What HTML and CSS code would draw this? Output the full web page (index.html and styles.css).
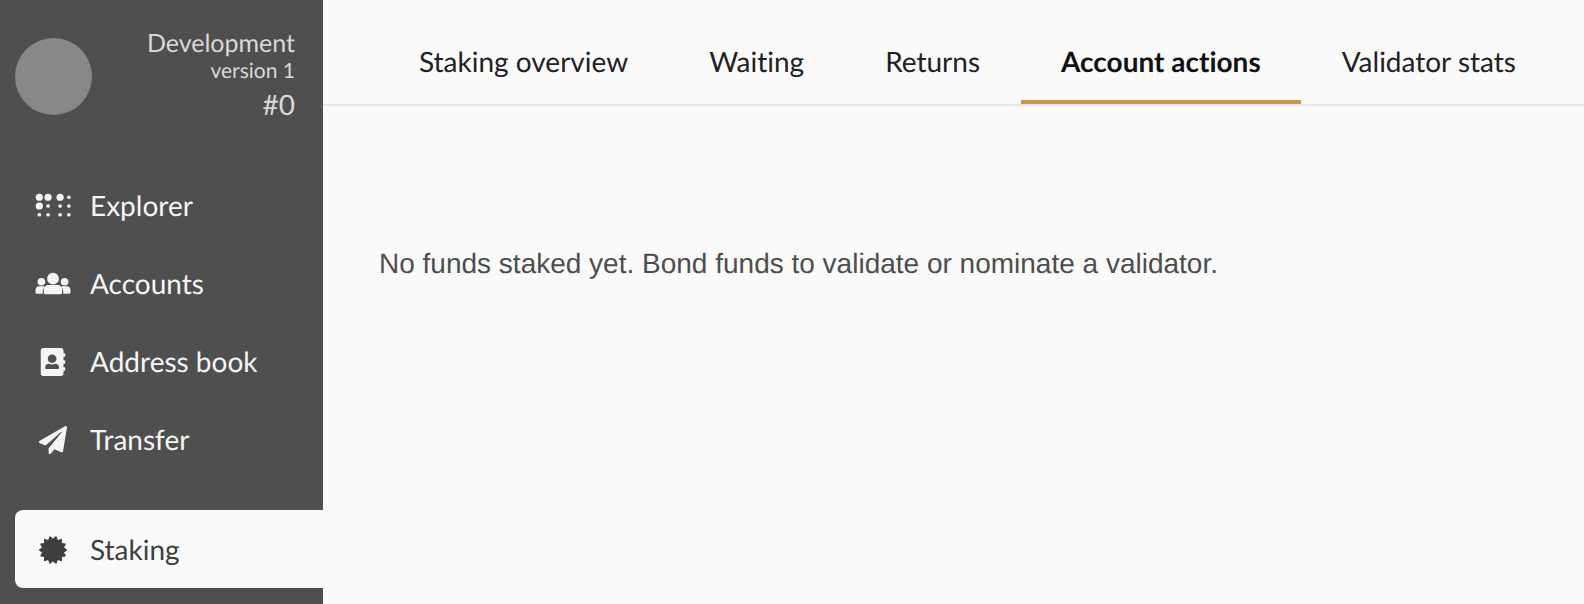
FILE: index.html
```html
<!DOCTYPE html>
<html lang="en">
<head>
<meta charset="utf-8">
<title>Staking</title>
<link rel="stylesheet" href="styles.css">
</head>
<body>
<div class="app">
  <aside class="sidebar">
    <header class="chain">
      <span class="chain-logo"></span>
      <div class="chain-info">
        <div class="chain-name">Development</div>
        <div class="chain-version">version 1</div>
        <div class="chain-block">#0</div>
      </div>
    </header>
    <nav class="menu">
      <a class="menu-item" href="#explorer">
        <svg class="icon" viewBox="0 0 640 512" aria-hidden="true"><circle cx="70" cy="96" r="66"/><circle cx="230" cy="96" r="66"/><circle cx="450" cy="96" r="66"/><circle cx="70" cy="256" r="66"/><circle cx="610" cy="96" r="34"/><circle cx="230" cy="256" r="34"/><circle cx="450" cy="256" r="34"/><circle cx="610" cy="256" r="34"/><circle cx="70" cy="416" r="34"/><circle cx="230" cy="416" r="34"/><circle cx="450" cy="416" r="34"/><circle cx="610" cy="416" r="34"/></svg>
        Explorer
      </a>
      <a class="menu-item" href="#accounts">
        <svg class="icon" viewBox="0 0 640 512" aria-hidden="true"><circle cx="320" cy="158" r="108"/><circle cx="108" cy="214" r="70"/><circle cx="532" cy="214" r="70"/><path d="M240 272h160c50 0 88 38 88 90v50c0 18-12 30-30 30H182c-18 0-30-12-30-30v-50c0-52 38-90 88-90zM68 296h74c12 0 22 4 30 10-28 28-40 60-40 96v32H28c-16 0-28-12-28-28v-42c0-38 30-68 68-68zM498 296h74c38 0 68 30 68 68v42c0 16-12 28-28 28H508v-32c0-36-12-68-40-96 8-6 18-10 30-10z"/></svg>
        Accounts
      </a>
      <a class="menu-item" href="#addresses">
        <svg class="icon" viewBox="0 0 448 512" aria-hidden="true"><path fill-rule="evenodd" d="M436 160c6.600 0 12-5.400 12-12v-40c0-6.600-5.400-12-12-12h-20V48c0-26.500-21.500-48-48-48H48C21.500 0 0 21.500 0 48v416c0 26.500 21.500 48 48 48h320c26.500 0 48-21.500 48-48v-48h20c6.600 0 12-5.400 12-12v-40c0-6.600-5.400-12-12-12h-20v-64h20c6.600 0 12-5.400 12-12v-40c0-6.600-5.400-12-12-12h-20v-64h20zM208 118a78 78 0 0 1 50 138c-30 26-70 26-100 0a78 78 0 0 1 50-138zM150 288c36 20 80 20 116 0c40 0 68 26 68 60v12c0 14-10 24-24 24H106c-14 0-24-10-24-24v-12c0-34 28-60 68-60z"/></svg>
        Address book
      </a>
      <a class="menu-item" href="#transfer">
        <svg class="icon" viewBox="0 0 512 512" aria-hidden="true"><path d="M476 3.200L12.500 270.600c-18.100 10.400-15.800 35.600 2.200 43.200L121 358.400l287.300-253.200c5.500-4.900 13.300 2.600 8.600 8.300L176 407v80.500c0 23.600 28.500 32.900 42.500 15.800L282 426l124.600 52.200c14.200 6 30.400-2.900 33-18.200l72-432C515 7.800 493.300-6.800 476 3.200z"/></svg>
        Transfer
      </a>
      <a class="menu-item menu-item-active" href="#staking" aria-current="page">
        <svg class="icon" viewBox="0 0 512 512" aria-hidden="true"><path stroke="currentColor" stroke-width="32" stroke-linejoin="round" d="M496 256L436 297L472 360L400 371L406 444L334 421L309 490L256 440L203 490L178 421L106 444L112 371L40 360L76 297L16 256L76 215L40 152L112 141L106 68L178 91L203 22L256 72L309 22L334 91L406 68L400 141L472 152L436 215Z"/></svg>
        Staking
      </a>
    </nav>
  </aside>
  <main class="content">
    <nav class="tabs">
      <a class="tab" href="#overview">Staking overview</a>
      <a class="tab" href="#waiting">Waiting</a>
      <a class="tab" href="#returns">Returns</a>
      <a class="tab tab-active" href="#actions" aria-current="page">Account actions</a>
      <a class="tab" href="#stats">Validator stats</a>
    </nav>
    <p class="notice">No funds staked yet. Bond funds to validate or nominate a validator.</p>
  </main>
</div>
</body>
</html>
```
FILE: styles.css
```css
* {
  box-sizing: border-box;
}

body {
  margin: 0;
  background: #fafafa;
  font-family: Lato, sans-serif;
  font-size: 28px;
  font-variant-ligatures: none;
  line-height: 40px;
  text-rendering: geometricPrecision;
}

a {
  color: inherit;
  text-decoration: none;
}

.app {
  display: flex;
  min-height: 100vh;
}

.sidebar {
  flex: 0 0 323px;
  background: #4f4f4f;
  color: #f5f5f5;
}

.chain {
  display: flex;
  align-items: center;
  justify-content: space-between;
  padding: 28px 28px 28px 15px;
  color: #d8d8d8;
  text-align: right;
}

.chain-logo {
  width: 77px;
  height: 77px;
  border-radius: 50%;
  background: #888;
}

.chain-name {
  font-size: 25px;
  line-height: 30px;
}

.chain-version {
  font-size: 21px;
  line-height: 26px;
}

.chain-block {
  line-height: 41px;
}

.menu {
  display: flex;
  flex-direction: column;
  padding: 14px 0 16px 15px;
}

.menu-item {
  display: flex;
  align-items: center;
  gap: 19px;
  height: 78px;
  padding: 0 0 2px 20px;
}

.menu-item-active {
  margin-top: 31px;
  padding-bottom: 0;
  border-radius: 8px 0 0 8px;
  background: #fafafa;
  color: #3f3f3f;
}

.icon {
  width: 36px;
  height: 28px;
  margin-top: 2px;
  fill: currentColor;
}

.content {
  flex: 1;
  min-width: 0;
}

.tabs {
  display: flex;
  gap: 1px;
  padding-left: 56px;
  border-bottom: 2px solid #e6e6e6;
  color: #222;
  white-space: nowrap;
}

.tab {
  padding: 41px 40px 19px;
  border-bottom: 4px solid transparent;
}

.tab-active {
  border-color: #cc9351;
  color: #111;
  font-weight: 700;
}

.notice {
  margin: 0;
  padding: 138px 56px;
  color: #4e4e4e;
  font-family: "Liberation Sans", Arial, sans-serif;
}
```
